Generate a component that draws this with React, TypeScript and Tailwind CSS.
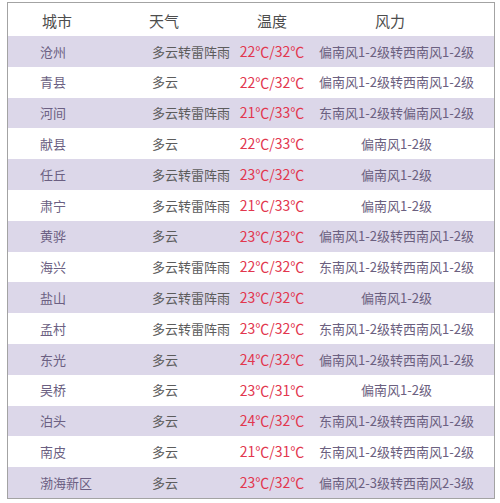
const rows = [
  ["沧州", "多云转雷阵雨", "22℃/32℃", "偏南风1-2级转西南风1-2级"],
  ["青县", "多云", "22℃/32℃", "偏南风1-2级转西南风1-2级"],
  ["河间", "多云转雷阵雨", "21℃/33℃", "东南风1-2级转偏南风1-2级"],
  ["献县", "多云", "22℃/33℃", "偏南风1-2级"],
  ["任丘", "多云转雷阵雨", "23℃/32℃", "偏南风1-2级"],
  ["肃宁", "多云转雷阵雨", "21℃/33℃", "偏南风1-2级"],
  ["黄骅", "多云", "23℃/32℃", "偏南风1-2级转西南风1-2级"],
  ["海兴", "多云转雷阵雨", "22℃/32℃", "东南风1-2级转西南风1-2级"],
  ["盐山", "多云转雷阵雨", "23℃/32℃", "偏南风1-2级"],
  ["孟村", "多云转雷阵雨", "23℃/32℃", "东南风1-2级转西南风1-2级"],
  ["东光", "多云", "24℃/32℃", "偏南风1-2级转西南风1-2级"],
  ["吴桥", "多云", "23℃/31℃", "偏南风1-2级"],
  ["泊头", "多云", "24℃/32℃", "东南风1-2级转西南风1-2级"],
  ["南皮", "多云", "21℃/31℃", "东南风1-2级转西南风1-2级"],
  ["渤海新区", "多云", "23℃/32℃", "偏南风2-3级转西南风2-3级"],
]

export default function App() {
  return (
    <div
      className="w-[500px] h-[503px] bg-white pt-[2px] pl-[7px]"
      style={{ fontFamily: '"Noto Sans CJK SC", "Noto Sans", sans-serif' }}
    >
      <div className="w-[488px] h-[497px] border border-[#a3a3a3] flex flex-col">
        {/* Header */}
        <div className="grid grid-cols-[137px_87px_80px_1fr] h-[33px] items-center pt-[3px] text-[15px] text-[#4d4d4d]">
          <div className="pl-[34px]">城市</div>
          <div className="pl-[4px]">天气</div>
          <div className="text-center">温度</div>
          <div className="text-center pr-[26px]">风力</div>
        </div>

        {/* Rows */}
        {rows.map((r, i) => (
          <div
            key={r[0]}
            className={`grid grid-cols-[137px_87px_80px_1fr] h-[30.8px] items-center text-[13px] ${
              i % 2 === 0 ? "bg-[#dcd7e9]" : "bg-white"
            }`}
          >
            <div className="pl-[32px] text-[#6b5f82]">{r[0]}</div>
            <div className="pl-[7px] text-[#5c5c5c]">{r[1]}</div>
            <div className="text-center text-[14px] text-[#e2364e]">{r[2]}</div>
            <div className="text-center pr-[13px] text-[#6b6080] whitespace-nowrap">{r[3]}</div>
          </div>
        ))}
      </div>
    </div>
  )
}
